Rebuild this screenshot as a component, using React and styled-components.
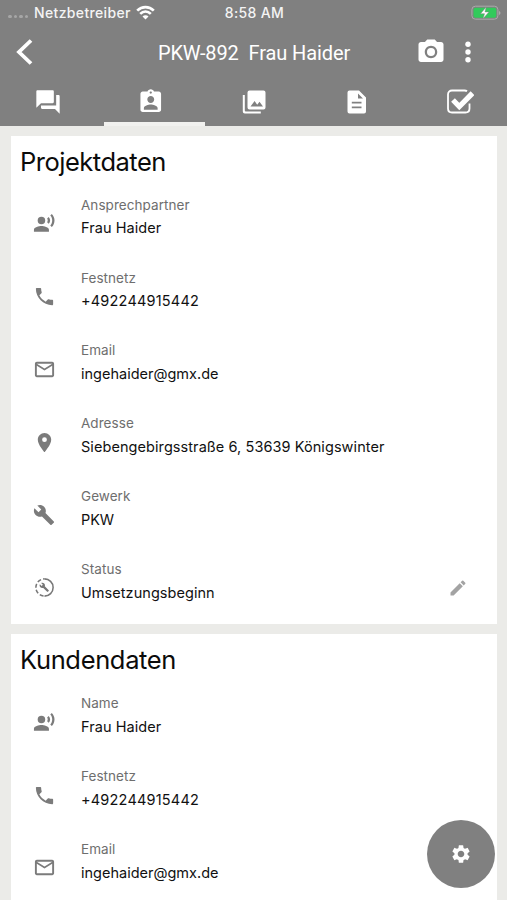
import React from "react";
import styled, { createGlobalStyle } from "styled-components";
import {
  MdForum, MdAssignmentInd, MdCameraAlt, MdRecordVoiceOver,
  MdPhone, MdMailOutline, MdPlace, MdBuild, MdEdit, MdSettings,
} from "react-icons/md";

const GlobalStyle = createGlobalStyle`
  * { box-sizing: border-box; }
  body { margin: 0; background: #ebebe8; overflow: hidden; }
`;

const Screen = styled.div`
  position: relative;
  width: 507px;
  height: 900px;
  overflow: hidden;
  background: #ebebe8;
  font-family: Inter, "Liberation Sans", sans-serif;
`;

const Header = styled.header`
  height: 125.5px;
  background: #808080;
  color: #fff;
`;

const StatusBar = styled.div`
  display: grid;
  grid-template-columns: 1fr auto 1fr;
  align-items: center;
  height: 26px;
  padding: 0 6px 0 8px;
  font-size: 14px;
  line-height: 18px;
  font-weight: 500;
  color: #f4f4f4;
`;

const Carrier = styled.div`
  display: flex;
  align-items: center;
  margin-top: -1px;
  white-space: nowrap;
  letter-spacing: 0.35px;
`;

const SignalDots = styled.span`
  display: flex;
  gap: 2px;
  margin: 8px 6px 0 0;
`;

const Dot = styled.i`
  width: 3.5px;
  height: 3.5px;
  border-radius: 50%;
  background: #a6a6a6;
`;

const Wifi = styled.svg`
  margin-left: 5px;
`;

const Clock = styled.span`
  margin-top: -1px;
  letter-spacing: 0.35px;
`;

const Battery = styled.svg`
  justify-self: end;
`;

const TitleBar = styled.div`
  display: grid;
  grid-template-columns: 104px 1fr 104px;
  align-items: center;
  height: 53px;
`;

const BackIcon = styled.svg`
  margin: -1px 0 0 14px;
`;

const Title = styled.h1`
  margin: 0;
  padding-left: 1px;
  text-align: center;
  white-space: pre;
  font: 400 20px/24px Roboto, sans-serif;
  letter-spacing: -0.1px;
`;

const Actions = styled.div`
  display: flex;
  align-items: center;
  padding-left: 13px;
  margin-top: -2px;
  gap: 18px;
`;

const Tabs = styled.nav`
  display: grid;
  grid-template-columns: repeat(5, 103px);
  width: 515px;
  height: 46.5px;
`;

const Tab = styled.div`
  display: flex;
  justify-content: center;
  align-items: center;
  padding: 3px 8px 0 0;
  border-bottom: 4px solid ${(p) => (p.$active ? "#f1f1ef" : "transparent")};
  margin: 0 1px;
`;

const Content = styled.main`
  display: flex;
  flex-direction: column;
  gap: 10px;
  padding: 10px 10px 0 11px;
`;

const Card = styled.section`
  flex: none;
  height: 488.9px;
  padding: 10px 0 0 10px;
  background: #fff;
`;

const CardTitle = styled.h2`
  margin: 0 0 0 -1px;
  height: 44.4px;
  color: #0b0b0b;
  font-size: 25.5px;
  line-height: 32px;
  font-weight: 400;
  letter-spacing: ${(p) => p.$tracking}px;
`;

const Row = styled.div`
  display: grid;
  grid-template-columns: 60px 1fr 58px;
  height: 72.95px;
`;

const RowIcon = styled.div`
  display: flex;
  height: 24px;
  margin: 21.3px 0 0 12px;
  align-items: center;
  color: #7b7b7b;
`;

const EditIcon = styled(RowIcon)`
  margin-left: 9px;
  color: #a3a3a3;
`;

const Label = styled.div`
  padding-top: 4.7px;
  font-size: 13.5px;
  line-height: 20px;
  letter-spacing: 0.06px;
  color: #6e6e6e;
`;

const Value = styled.div`
  margin-top: 3.3px;
  font-size: 14.5px;
  line-height: 20px;
  letter-spacing: ${(p) => p.$tracking ?? 0.05}px;
  color: #111;
  white-space: nowrap;
`;

const Fab = styled.button`
  position: absolute;
  right: 12px;
  bottom: 12px;
  width: 68px;
  height: 68px;
  display: flex;
  justify-content: center;
  align-items: center;
  padding: 0;
  border: 0;
  border-radius: 50%;
  background: #808080;
  color: #fff;
`;

const GalleryIcon = () => (
  <svg width="24" height="24" viewBox="0 0 24 24" fill="#fff">
    <path fillRule="evenodd" d="M7.5.5h14a2 2 0 0 1 2 2v15a2 2 0 0 1-2 2h-14a2 2 0 0 1-2-2v-15a2 2 0 0 1 2-2ZM8.5 16.5h12.5l-3.5-4.800-2.300 3-2.600-3.700Z" />
    <path d="M.8 5h2v15.5a1 1 0 0 0 1 1h15v2h-16a2 2 0 0 1-2-2Z" />
  </svg>
);

const DocumentIcon = () => (
  <svg width="20" height="24" viewBox="0 0 20 24">
    <path fill="#fff" fillRule="evenodd" d="M2.5.5H12l7 7v14a2 2 0 0 1-2 2H2.5a2 2 0 0 1-2-2v-19a2 2 0 0 1 2-2ZM11 3.5V8.5h5ZM4.8 11.8v1.7h9.7v-1.7ZM4.8 16.5v1.7h9.7v-1.7Z" />
  </svg>
);

const CheckIcon = () => (
  <svg width="28" height="26" viewBox="0 0 28 26" fill="none" stroke="#fff">
    <path strokeWidth="1.8" d="M21 2.3C20.3 1.7 19.5 1.5 18.5 1.5H6C3.6 1.5 2 3.1 2 5.5v14c0 2.4 1.6 4 4 4h13.5c2.4 0 4-1.6 4-4v-5" />
    <path strokeWidth="5.2" d="m7 11 6.3 6.5L26.5 4.2" />
  </svg>
);

const StatusIcon = () => (
  <svg width="23" height="23" viewBox="0 0 24 24">
    <path d="M12 3A9 9 0 0 1 12 21" fill="none" stroke="#777" strokeWidth="1.6" />
    <path d="M12 21A9 9 0 0 1 12 3" fill="none" stroke="#777" strokeWidth="1.6" strokeDasharray="4.2 2.2" strokeDashoffset="-1" />
    <path fill="#777" d="m16.4 14.9-4.1-4.1c.4-1 .2-2.2-.6-3-.9-.8-2.2-1-3.2-.5L10.3 9.1 9 10.4 7.2 8.6c-.6 1-.4 2.3.5 3.2.8.8 2 1 3 .6l4.1 4.1c.2.2.5.2.7 0l.9-.9c.2-.2.2-.5 0-.7Z" />
  </svg>
);

const projectRows = [
  { icon: <MdRecordVoiceOver size={22.5} />, label: "Ansprechpartner", value: "Frau Haider" },
  { icon: <MdPhone size={23} />, label: "Festnetz", value: "+492244915442", tracking: 0.2 },
  { icon: <MdMailOutline size={23} />, label: "Email", value: "ingehaider@gmx.de", tracking: 0 },
  { icon: <MdPlace size={23} />, label: "Adresse", value: "Siebengebirgsstraße 6, 53639 Königswinter", tracking: 0.07 },
  { icon: <MdBuild size={22} />, label: "Gewerk", value: "PKW", tracking: -0.1 },
  { icon: <StatusIcon />, label: "Status", value: "Umsetzungsbeginn", editable: true },
];

const customerRows = [
  { ...projectRows[0], label: "Name" },
  projectRows[1],
  projectRows[2],
];

const DataCard = ({ title, tracking, rows }) => (
  <Card>
    <CardTitle $tracking={tracking}>{title}</CardTitle>
    {rows.map((row) => (
      <Row key={row.label}>
        <RowIcon>{row.icon}</RowIcon>
        <div>
          <Label>{row.label}</Label>
          <Value $tracking={row.tracking}>{row.value}</Value>
        </div>
        {row.editable && <EditIcon><MdEdit size={20} /></EditIcon>}
      </Row>
    ))}
  </Card>
);

export default function App() {
  return (
    <Screen>
      <GlobalStyle />
      <Header>
        <StatusBar>
          <Carrier>
            <SignalDots><Dot /><Dot /><Dot /><Dot /></SignalDots>
            Netzbetreiber
            <Wifi width="19" height="15" viewBox="0 0 19 15" fill="none" stroke="#fff" strokeWidth="2.7">
              <path d="M1.2 5.6C6 .9 13 .9 17.8 5.6M4.2 8.9c3.1-3 7.5-3 10.6 0" />
              <path d="M9.5 14.5 6.5 11.5c1.6-1.7 4.4-1.7 6 0Z" fill="#fff" stroke="none" />
            </Wifi>
          </Carrier>
          <Clock>8:58 AM</Clock>
          <Battery width="30" height="16" viewBox="0 0 30 16">
            <rect x="0.9" y="1.2" width="26" height="13" rx="3.5" fill="none" stroke="#aaa" />
            <rect x="2.5" y="2.7" width="22.8" height="10" rx="2" fill="#32ca5b" />
            <path d="M28 6v4c2-.8 2-3.2 0-4Z" fill="#aaa" />
            <path d="m15.2 2-5.7 6.7h4L12 13.8l6-6.9h-4Z" fill="#fff" stroke="#808080" strokeWidth=".5" />
          </Battery>
        </StatusBar>
        <TitleBar>
          <BackIcon width="20" height="28" viewBox="0 0 20 28" fill="none" stroke="#fff" strokeWidth="3.8">
            <path d="M17 2.5 5 14l12 11.5" />
          </BackIcon>
          <Title>PKW-892  Frau Haider</Title>
          <Actions>
            <MdCameraAlt size={30} />
            <svg width="8" height="22" viewBox="0 0 8 22" fill="#fff">
              <circle cx="4" cy="3.3" r="2.7" />
              <circle cx="4" cy="11" r="2.7" />
              <circle cx="4" cy="18.7" r="2.7" />
            </svg>
          </Actions>
        </TitleBar>
        <Tabs>
          <Tab><MdForum size={28} /></Tab>
          <Tab $active><MdAssignmentInd size={27.5} /></Tab>
          <Tab><GalleryIcon /></Tab>
          <Tab><DocumentIcon /></Tab>
          <Tab><CheckIcon /></Tab>
        </Tabs>
      </Header>
      <Content>
        <DataCard title="Projektdaten" tracking={-0.5} rows={projectRows} />
        <DataCard title="Kundendaten" tracking={-0.35} rows={customerRows} />
      </Content>
      <Fab><MdSettings size={22} /></Fab>
    </Screen>
  );
}
